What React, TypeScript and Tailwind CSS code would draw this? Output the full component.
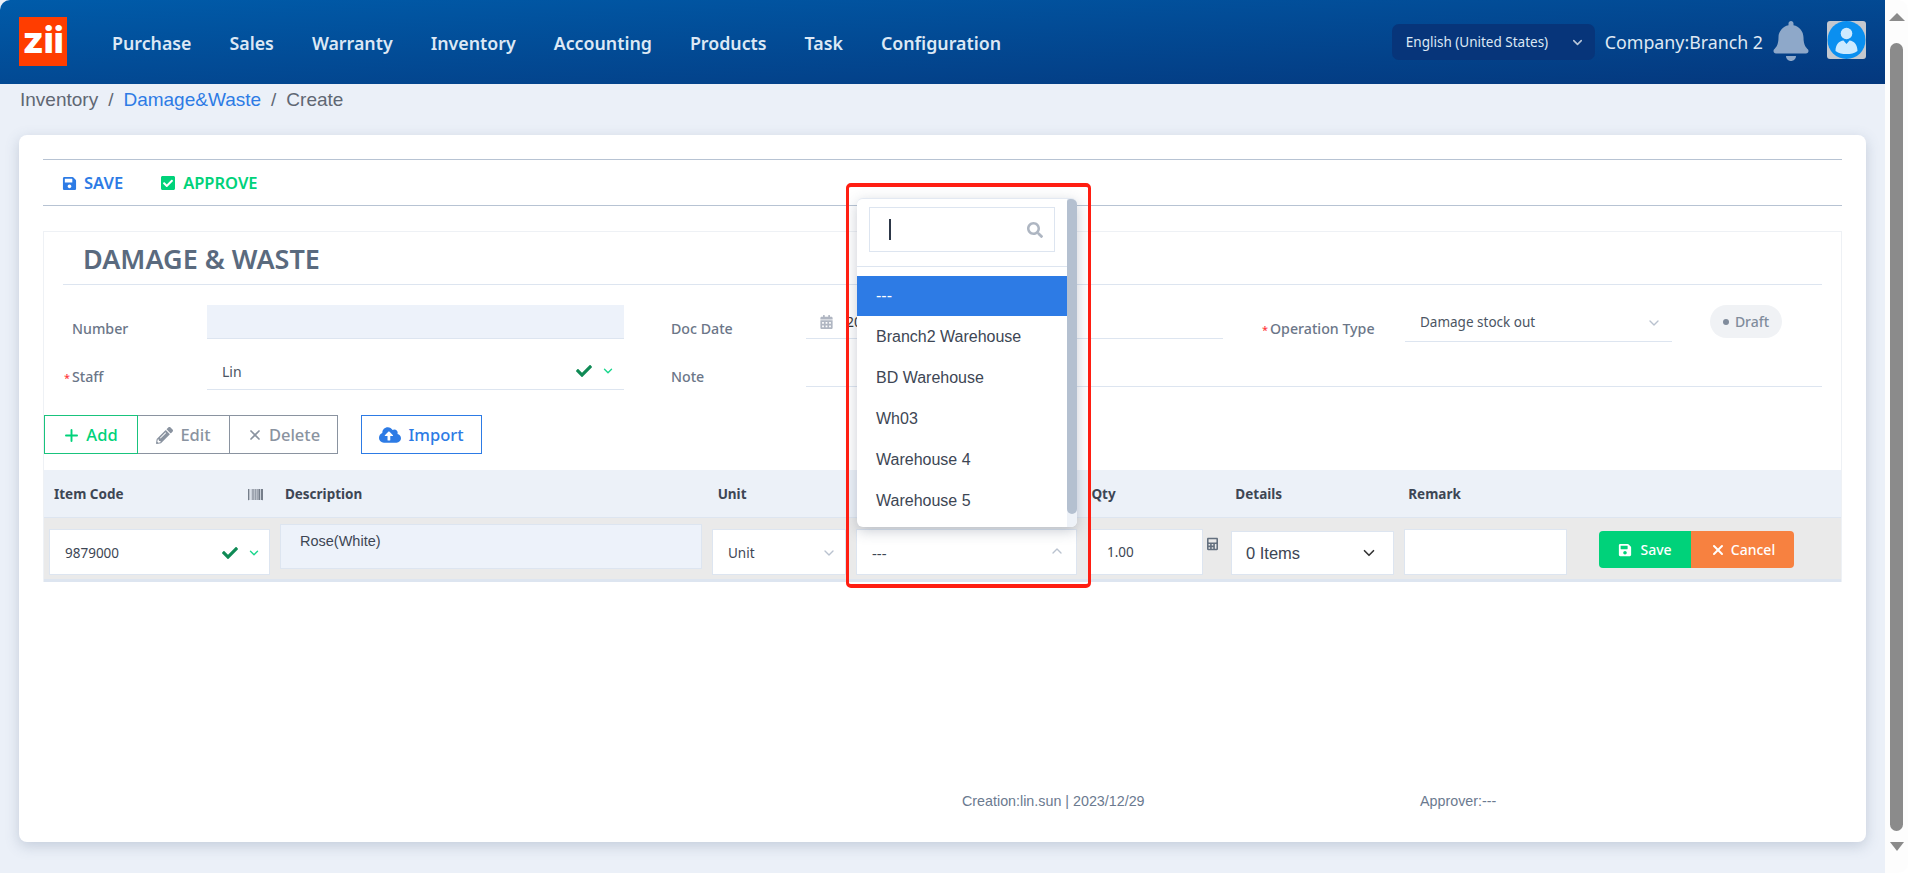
import { ChevronDown, ChevronUp, Plus, X } from 'lucide-react';
import { FaBarcode, FaBell, FaCalculator, FaCalendarAlt, FaCheck, FaCheckSquare, FaCloudUploadAlt, FaPencilAlt, FaSave, FaSearch } from 'react-icons/fa';

const navItems = ['Purchase', 'Sales', 'Warranty', 'Inventory', 'Accounting', 'Products', 'Task', 'Configuration'];
const warehouses = ['Branch2 Warehouse', 'BD Warehouse', 'Wh03', 'Warehouse 4', 'Warehouse 5'];

function Label({ text, required }: { text: string; required?: boolean }) {
  return (
    <div className="w-[143px] h-[20px] flex items-center text-[14.2px] leading-[20px] font-medium text-[#6b7688] shrink-0">
      <span className="w-[8px] text-[#ff3b3b] text-[11px] leading-[20px] pt-[2px]">{required ? '*' : ''}</span>
      <span>{text}</span>
    </div>
  );
}

function CheckChevron() {
  return (
    <div className="flex items-center gap-[8px]">
      <FaCheck className="w-[18px] h-[16px] text-[#0f8a55]" />
      <ChevronDown className="w-[14px] h-[14px] text-[#19d68c]" strokeWidth={2.4} />
    </div>
  );
}

function Header() {
  return (
    <header className="h-[84px] rounded-tl-[10px] bg-gradient-to-br from-[#005ba9] to-[#04387e] flex items-center justify-between pl-[19px] pr-[19px]">
      <div className="flex items-center">
        <div className="w-[48px] h-[49px] bg-[#ff3d00] flex items-center justify-center font-['Inter',sans-serif] font-extrabold text-[37px] leading-none tracking-[-0.5px] text-white -mt-[2px] pb-[3px]">
          zii
        </div>
        <nav className="flex items-center gap-[38px] ml-[45px] mt-[2px] text-[17.8px] font-semibold text-[#dce8f5]">
          {navItems.map((item) => (
            <span key={item}>{item}</span>
          ))}
        </nav>
      </div>
      <div className="flex items-center">
        <div className="w-[203px] h-[36px] rounded-[7px] bg-[#07357a] flex items-center justify-between pl-[14px] pr-[10px] pt-[1px] text-[13.5px] text-[#dce8f5] -mt-[1px]">
          <span>English (United States)</span>
          <ChevronDown className="w-[15px] h-[15px] text-[#b9c6d8]" strokeWidth={2.5} />
        </div>
        <span className="ml-[10px] text-[17.8px] text-[#dfe8f3] mt-[1px]">Company:Branch 2</span>
        <FaBell className="ml-[9px] w-[38px] h-[40px] text-[#8ea8c9] -mt-[3px]" />
        <div className="ml-[17px] w-[39px] h-[38px] rounded-[3px] bg-[#c4c8cf] -mt-[4px]">
          <svg viewBox="0 0 39 38" className="w-full h-full">
            <circle cx="19.5" cy="19" r="19" fill="#0a8ff0" />
            <circle cx="19.5" cy="12.5" r="5.8" fill="#cdeaff" />
            <path d="M8.500 30c0-6.500 3.500-10 8-10.500l3 3.500 3-3.500c4.500.5 8 4 8 10.500-3 2.500-7 3-11 3s-8-.5-11-3z" fill="#cdeaff" />
          </svg>
        </div>
      </div>
    </header>
  );
}

function Toolbar() {
  return (
    <div className="h-[47px] border-t-[1.5px] border-b-[1.5px] border-[#b7c3d3] flex items-center pl-[19px] pt-[1px] text-[16.5px] font-semibold">
      <div className="flex items-center gap-[7px] text-[#2d7be5]">
        <FaSave className="w-[15px] h-[15px]" />
        <span>SAVE</span>
      </div>
      <div className="flex items-center gap-[7px] text-[#00d27a] ml-[37px]">
        <FaCheckSquare className="w-[16px] h-[16px]" />
        <span>APPROVE</span>
      </div>
    </div>
  );
}

function FormFields() {
  return (
    <div className="pl-[20px]">
      <div className="flex items-start h-[49px]">
        <div className="mt-[14px]"><Label text="Number" /></div>
        <div className="w-[417px] h-[34px] bg-[#edf2fa] border-b border-[#dde5f0]" />
        <div className="ml-[39px] mt-[14px]"><Label text="Doc Date" /></div>
        <div className="w-[417px] h-[34px] border-b border-[#dde5f0] flex items-center pl-[14px] text-[14px] text-[#333]">
          <FaCalendarAlt className="w-[13px] h-[14px] text-[#b0b6c2]" />
          <span className="ml-[13px]">20</span>
        </div>
        <div className="ml-[39px] mt-[14px]"><Label text="Operation Type" required /></div>
        <div className="w-[267px] h-[38px] border-b border-[#dde5f0] flex items-center justify-between pl-[15px] pr-[10px] text-[13.5px] text-[#4b5563] -mt-[1px]">
          <span>Damage stock out</span>
          <ChevronDown className="w-[16px] h-[16px] text-[#b9c2cf]" />
        </div>
        <div className="ml-[38px] w-[72px] h-[33px] rounded-full bg-[#f0f2f5] flex items-center justify-center gap-[6px] text-[14px] font-medium text-[#808c9c]">
          <span className="w-[6px] h-[6px] rounded-full bg-[#808c9c]" />
          <span>Draft</span>
        </div>
      </div>
      <div className="flex items-start">
        <div className="mt-[13px]"><Label text="Staff" required /></div>
        <div className="w-[417px] h-[36px] border-b border-[#dde5f0] flex items-center justify-between pl-[15px] pr-[9px] pb-[1px] text-[14px] text-[#4b5563]">
          <span>Lin</span>
          <CheckChevron />
        </div>
        <div className="ml-[39px] mt-[13px]"><Label text="Note" /></div>
        <div className="w-[1016px] h-[33px] border-b border-[#dde5f0]" />
      </div>
    </div>
  );
}

function ActionButtons() {
  return (
    <div className="flex items-start mt-[25px] h-[39px] text-[16.5px] font-medium">
      <div className="flex">
        <button className="w-[94px] h-[39px] border border-[#19c37d] text-[#00d27a] flex items-center justify-center gap-[5px] pr-[2px] pt-[1px]">
          <Plus className="w-[19px] h-[19px]" strokeWidth={2.4} />
          Add
        </button>
        <button className="w-[92px] h-[39px] border-y border-r border-[#8a93a0] text-[#8a93a0] flex items-center justify-center gap-[7px] pt-[1px]">
          <FaPencilAlt className="w-[17px] h-[17px]" />
          Edit
        </button>
        <button className="w-[108px] h-[39px] border-y border-r border-[#8a93a0] text-[#8a93a0] flex items-center justify-center gap-[6px] pt-[1px]">
          <X className="w-[16px] h-[16px]" strokeWidth={2.6} />
          Delete
        </button>
      </div>
      <button className="ml-[23px] w-[121px] h-[39px] border border-[#2d7be5] text-[#2d7be5] flex items-center justify-center gap-[7px] pt-[1px]">
        <FaCloudUploadAlt className="w-[22px] h-[20px]" />
        Import
      </button>
    </div>
  );
}

function ItemTable() {
  return (
    <div className="mt-[16px]">
      <div className="h-[48px] bg-[#ecf1f8] border-b border-[#dde5f0] flex items-center pt-[1px] text-[13.5px] font-bold text-[#3d4654]">
        <div className="w-[231px] pl-[10px] pr-[12px] flex items-center justify-between">
          <span>Item Code</span>
          <FaBarcode className="w-[15px] h-[15px] text-[#4b5563]" />
        </div>
        <div className="w-[433px] pl-[10px]">Description</div>
        <div className="w-[144px] pl-[10px]">Unit</div>
        <div className="w-[230px]" />
        <div className="w-[144px] pl-[10px]">Qty</div>
        <div className="w-[173px] pl-[10px]">Details</div>
        <div className="w-[443px] pl-[10px]">Remark</div>
      </div>
      <div className="h-[64px] bg-[#eaeaea] border-b-[3px] border-[#dde5f0] flex items-start font-['Liberation_Sans',sans-serif] text-[14.5px] text-[#3d4654]">
        <div className="w-[231px] pl-[5px] pr-[5px] pt-[11px]">
          <div className="h-[46px] bg-white border border-[#dde5f0] flex items-center justify-between pl-[15px] pr-[8px] pt-[2px] font-['Noto_Sans',sans-serif] text-[13.5px]">
            <span>9879000</span>
            <CheckChevron />
          </div>
        </div>
        <div className="w-[433px] pl-[5px] pr-[6px] pt-[6px]">
          <div className="h-[45px] bg-[#edf2fa] border border-[#dde5f0] pl-[19px] pt-[7px] leading-[18px]">Rose(White)</div>
        </div>
        <div className="w-[144px] pl-[4px] pr-[6px] pt-[11px]">
          <div className="h-[46px] bg-white border border-[#dde5f0] flex items-center justify-between pl-[15px] pr-[8px] pt-[2px] font-['Noto_Sans',sans-serif] text-[13.5px]">
            <span>Unit</span>
            <ChevronDown className="w-[16px] h-[16px] text-[#b9c2cf]" />
          </div>
        </div>
        <div className="w-[230px] pl-[4px] pr-[5px] pt-[11px]">
          <div className="h-[46px] bg-white border border-[#dde5f0] flex items-center justify-between pl-[15px] pr-[11px] pt-[2px] font-['Noto_Sans',sans-serif] text-[15px]">
            <span>---</span>
            <ChevronUp className="w-[16px] h-[16px] text-[#b9c2cf] -mt-[5px]" />
          </div>
        </div>
        <div className="w-[144px] pl-[8px] pt-[11px] flex items-start">
          <div className="w-[113px] h-[46px] bg-white border border-[#dde5f0] flex items-center pl-[16px] font-['Noto_Sans',sans-serif] text-[13.5px]">1.00</div>
          <FaCalculator className="ml-[4px] mt-[8px] w-[11px] h-[14px] text-[#64707f]" />
        </div>
        <div className="w-[173px] pl-[5px] pr-[5px] pt-[13px]">
          <div className="h-[44px] bg-white border border-[#dde5f0] flex items-center justify-between pl-[14px] pr-[15px] pt-[1px] text-[16.5px]">
            <span>0 Items</span>
            <ChevronDown className="w-[18px] h-[18px] text-[#333] -mt-[2px]" strokeWidth={2.2} />
          </div>
        </div>
        <div className="w-[190px] pl-[5px] pr-[22px] pt-[11px]">
          <div className="h-[46px] bg-white border border-[#dde5f0]" />
        </div>
        <div className="pl-[10px] pt-[13px] flex font-['Noto_Sans',sans-serif] text-[14px] font-medium text-white">
          <button className="w-[92px] h-[37px] rounded-l-[4px] bg-[#00d27a] flex items-center justify-center gap-[8px]">
            <FaSave className="w-[14px] h-[14px]" />
            Save
          </button>
          <button className="w-[103px] h-[37px] rounded-r-[4px] bg-[#f78140] flex items-center justify-center gap-[5px]">
            <X className="w-[16px] h-[16px]" strokeWidth={3} />
            Cancel
          </button>
        </div>
      </div>
    </div>
  );
}

function WarehouseDropdown() {
  return (
    <div className="absolute left-[857px] top-[198px] w-[220px] h-[329px] bg-white rounded-[6px] border-t border-[#e3e9f2] shadow-[0_4px_14px_rgba(60,75,100,0.28)] overflow-hidden font-['Liberation_Sans',sans-serif] text-[16px] text-[#3d4654]">
      <div className="h-[68px] border-b border-[#dde5f0] pl-[12px] pt-[8px]">
        <div className="w-[186px] h-[45px] border border-[#dde5f0] flex items-center justify-between pl-[19px] pr-[11px]">
          <span className="w-[2px] h-[21px] bg-[#2d3748]" />
          <FaSearch className="w-[16px] h-[16px] text-[#aeb6c2]" />
        </div>
      </div>
      <div className="pt-[9px] w-[210px]">
        <div className="h-[40px] bg-[#2d7be5] text-white flex items-center pl-[19px]">---</div>
        {warehouses.map((name) => (
          <div key={name} className="h-[40.8px] flex items-center pl-[19px] pt-[2px]">{name}</div>
        ))}
      </div>
      <div className="absolute right-0 top-0 bottom-0 w-[10px] bg-[#eef2f8]">
        <div className="h-[315px] rounded-b-[5px] rounded-t-[3px] bg-[#b4c0d0]" />
      </div>
    </div>
  );
}

function WindowScrollbar() {
  return (
    <div className="w-[23px] bg-[#fdfdfd] rounded-r-[10px] flex flex-col items-center pt-[13px]">
      <div className="w-0 h-0 border-x-[8px] border-x-transparent border-b-[8px] border-b-[#8b8b8b]" />
      <div className="mt-[22px] w-[13px] h-[788px] rounded-full bg-[#8b8b8b]" />
      <div className="mt-[11px] w-0 h-0 border-x-[7px] border-x-transparent border-t-[9px] border-t-[#8b8b8b]" />
    </div>
  );
}

export default function App() {
  return (
    <div className="relative w-[1908px] h-[873px] overflow-hidden bg-white flex font-['Noto_Sans',sans-serif]">
      <main className="w-[1885px] h-[873px] bg-[#ebf0f8]">
        <Header />
        <div className="h-[32px] pl-[20px] flex items-center gap-[10px] font-['Liberation_Sans',sans-serif] text-[19px] text-[#5f6773]">
          <span>Inventory</span>
          <span>/</span>
          <span className="text-[#2d7be5]">Damage&amp;Waste</span>
          <span>/</span>
          <span>Create</span>
        </div>
        <section className="mt-[19px] ml-[19px] w-[1847px] h-[707px] rounded-[8px] bg-white shadow-[0_4px_14px_rgba(80,100,130,0.25)] pt-[24px] px-[24px]">
          <Toolbar />
          <div className="mt-[25px] border-x border-t border-[#eef1f5]">
            <div className="ml-[19px] mr-[19px] h-[53px] border-b border-[#dde5f0] pl-[20px] pt-[3px] flex items-center text-[27px] font-semibold text-[#5a6a7e]">
              DAMAGE &amp; WASTE
            </div>
            <div className="pt-[20px]">
              <FormFields />
              <ActionButtons />
              <ItemTable />
            </div>
          </div>
          <div className="mt-[209px] pl-[919px] flex font-['Liberation_Sans',sans-serif] text-[14.3px] leading-[20px] text-[#6b7a8f]">
            <span className="w-[458px]">Creation:lin.sun | 2023/12/29</span>
            <span>Approver:---</span>
          </div>
        </section>
      </main>
      <WindowScrollbar />
      <WarehouseDropdown />
      <div className="absolute left-[846px] top-[183px] w-[245px] h-[405px] rounded-[5px] border-x-[3px] border-y-[4px] border-[#ff1e12]" />
    </div>
  );
}
